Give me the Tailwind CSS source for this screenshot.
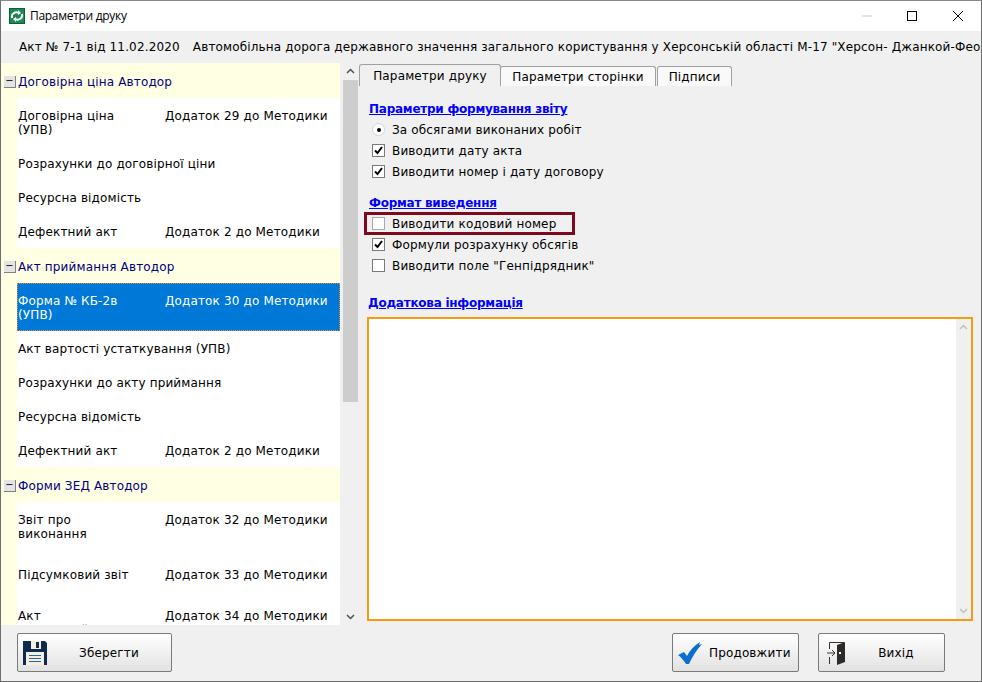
<!DOCTYPE html>
<html lang="uk">
  <head>
    <meta charset="UTF-8" />
    <title>Параметри друку</title>
    <script src="https://cdn.jsdelivr.net/npm/@tailwindcss/browser@4"></script>
  </head>
  <body class="w-[982px] h-[682px] overflow-hidden bg-[#f0f0f0] font-['DejaVu_Sans',sans-serif] text-[12px] tracking-[0.15px] text-black">
    <div class="flex flex-col h-[682px] border border-[#6e6e6e] border-t-[#8a8a8a]">
      <!-- title bar -->
      <div class="flex items-center h-[30px] bg-white shrink-0">
        <svg class="ml-[8px] w-[16px] h-[16px]" viewBox="0 0 16 16">
          <rect width="16" height="16" fill="#0c5f36" />
          <rect x="1" y="1" width="14" height="14" fill="#1c8a50" />
          <path d="M3 10c-1-4 3-7 7-5M13 6c1 4-3 7-7 5" fill="none" stroke="#fff" stroke-width="2" />
          <path d="M9 2l3 3-3 2zM7 14l-3-3 3-2z" fill="#fff" />
        </svg>
        <span class="ml-[5px] font-['Open_Sans',sans-serif] text-[12px] tracking-[-0.3px]">Параметри друку</span>
        <div class="ml-auto flex items-center h-full text-black">
          <svg class="w-[46px] h-[30px]" viewBox="0 0 46 30"><path d="M19 15h10" stroke="#c8c8c8" /></svg>
          <svg class="w-[46px] h-[30px]" viewBox="0 0 46 30"><rect x="18.500" y="10.500" width="9" height="9" fill="none" stroke="#000" /></svg>
          <svg class="w-[46px] h-[30px]" viewBox="0 0 46 30"><path d="M18 10l10 10M28 10l-10 10" stroke="#000" /></svg>
        </div>
      </div>
      <!-- document line -->
      <div class="flex items-center h-[32px] pl-[18px] shrink-0 whitespace-nowrap overflow-hidden">
        <span>Акт № 7-1 від 11.02.2020</span>
        <span class="ml-[13px]">Автомобільна дорога державного значення загального користування у Херсонській області М-17 "Херсон- Джанкой-Феодосія-Керч"</span>
      </div>
      <!-- middle -->
      <div class="flex h-[562px] shrink-0">
        <div class="w-[339px] h-full overflow-hidden bg-[#ffffe3] shrink-0">
          <div class="flex items-center h-[35px] pt-[2px] text-[#000080]">
            <span class="flex items-center justify-center ml-[3px] mr-[2px] w-[12px] h-[12px] bg-[#e4e4e4] border-r border-b border-[#808080] text-[#000] leading-none text-[10px]">−</span>
            Договірна ціна Автодор
          </div>
          <div class="ml-[16px] bg-white">
            <div class="flex items-start h-[48px] pl-px pt-[11px]"><span class="w-[147px] leading-[14px]">Договірна ціна<br />(УПВ)</span><span class="leading-[14px]">Додаток 29 до Методики</span></div>
            <div class="flex items-center h-[34px] pl-px pt-[2px]"><span>Розрахунки до договірної ціни</span></div>
            <div class="flex items-center h-[34px] pl-px pt-[2px]"><span>Ресурсна відомість</span></div>
            <div class="flex items-center h-[34px] pl-px pt-[2px]"><span class="w-[147px]">Дефектний акт</span><span>Додаток 2 до Методики</span></div>
          </div>
          <div class="flex items-center h-[35px] pt-[2px] text-[#000080]">
            <span class="flex items-center justify-center ml-[3px] mr-[2px] w-[12px] h-[12px] bg-[#e4e4e4] border-r border-b border-[#808080] text-[#000] leading-none text-[10px]">−</span>
            Акт приймання Автодор
          </div>
          <div class="ml-[16px] bg-white">
            <div class="flex items-start h-[48px] pt-[10px] bg-[#0078d7] text-white border border-dotted border-[#e08a3c]"><span class="w-[147px] leading-[14px]">Форма № КБ-2в<br />(УПВ)</span><span class="leading-[14px]">Додаток 30 до Методики</span></div>
            <div class="flex items-center h-[34px] pl-px pt-[2px]"><span>Акт вартості устаткування (УПВ)</span></div>
            <div class="flex items-center h-[34px] pl-px pt-[2px]"><span>Розрахунки до акту приймання</span></div>
            <div class="flex items-center h-[34px] pl-px pt-[2px]"><span>Ресурсна відомість</span></div>
            <div class="flex items-center h-[34px] pl-px pt-[2px]"><span class="w-[147px]">Дефектний акт</span><span>Додаток 2 до Методики</span></div>
          </div>
          <div class="flex items-center h-[35px] pt-[2px] text-[#000080]">
            <span class="flex items-center justify-center ml-[3px] mr-[2px] w-[12px] h-[12px] bg-[#e4e4e4] border-r border-b border-[#808080] text-[#000] leading-none text-[10px]">−</span>
            Форми ЗЕД Автодор
          </div>
          <div class="ml-[16px] bg-white">
            <div class="flex items-start h-[48px] pl-px pt-[11px]"><span class="w-[147px] leading-[14px]">Звіт про<br />виконання</span><span class="leading-[14px]">Додаток 32 до Методики</span></div>
            <div class="flex items-center h-[48px] pl-px pt-[2px]"><span class="w-[147px]">Підсумковий звіт</span><span>Додаток 33 до Методики</span></div>
            <div class="flex items-start h-[48px] pl-px pt-[11px]"><span class="w-[147px] leading-[14px]">Акт<br />проміжний</span><span class="leading-[14px]">Додаток 34 до Методики</span></div>
          </div>
        </div>
        <!-- list scrollbar -->
        <div class="flex flex-col w-[15px] ml-[3px] shrink-0 bg-[#f0f0f0]">
          <svg class="w-[15px] h-[17px] shrink-0" viewBox="0 0 15 17"><path d="M4 10l3.500-3.500L11 10" fill="none" stroke="#505050" stroke-width="1.500" /></svg>
          <div class="h-[322px] bg-[#cdcdcd]"></div>
          <svg class="w-[15px] h-[17px] mt-auto shrink-0" viewBox="0 0 15 17"><path d="M4 7l3.500 3.500L11 7" fill="none" stroke="#505050" stroke-width="1.500" /></svg>
        </div>
        <!-- right panel -->
        <div class="flex-1 flex flex-col min-w-0">
          <div class="flex items-end h-[23px] pl-[1px] shrink-0">
            <div class="flex items-center justify-center w-[142px] h-[22px] bg-[#f0f0f0] border border-b-0 border-[#a0a0a0] rounded-t-[3px]">Параметри друку</div>
            <div class="flex items-center justify-center w-[156px] h-[20px] bg-[#f9f9f9] border border-b-0 border-[#a0a0a0] rounded-t-[3px] -ml-px">Параметри сторінки</div>
            <div class="flex items-center justify-center w-[75px] h-[20px] bg-[#f9f9f9] border border-b-0 border-[#a0a0a0] rounded-t-[3px] ml-[1px]">Підписи</div>
          </div>
          <div class="pl-[11px] pt-[15px] flex flex-col">
            <a class="h-[16px] leading-[16px] font-bold tracking-[-0.25px] text-[#0000ff] underline">Параметри формування звіту</a>
            <div class="flex items-center h-[21px] mt-[2px]">
              <span class="flex items-center justify-center ml-[3px] w-[13px] h-[13px] rounded-full bg-white border border-[#d4d4d4]"><span class="w-[4px] h-[4px] rounded-full bg-black"></span></span>
              <span class="ml-[7px]">За обсягами виконаних робіт</span>
            </div>
            <div class="flex items-center h-[21px]">
              <span class="flex items-center justify-center ml-[3px] w-[13px] h-[13px] bg-white border border-[#7a7a7a]"><svg class="w-[11px] h-[11px]" viewBox="0 0 11 11"><path d="M2 5.500l2.500 2.500 4.500-6" fill="none" stroke="#000" stroke-width="2" /></svg></span>
              <span class="ml-[7px]">Виводити дату акта</span>
            </div>
            <div class="flex items-center h-[21px]">
              <span class="flex items-center justify-center ml-[3px] w-[13px] h-[13px] bg-white border border-[#7a7a7a]"><svg class="w-[11px] h-[11px]" viewBox="0 0 11 11"><path d="M2 5.500l2.500 2.500 4.500-6" fill="none" stroke="#000" stroke-width="2" /></svg></span>
              <span class="ml-[7px]">Виводити номер і дату договору</span>
            </div>
            <a class="h-[16px] leading-[16px] mt-[13px] font-bold tracking-[-0.25px] text-[#0000ff] underline">Формат виведення</a>
            <div class="flex items-center w-[211px] h-[23px] -ml-[5px] mt-[1px] border-[3px] border-[#7b0a1e]">
              <span class="ml-[5px] w-[13px] h-[13px] bg-white border border-[#a8a8a8] shrink-0"></span>
              <span class="ml-[7px]">Виводити кодовий номер</span>
            </div>
            <div class="flex items-center h-[21px] -mt-px">
              <span class="flex items-center justify-center ml-[3px] w-[13px] h-[13px] bg-white border border-[#7a7a7a]"><svg class="w-[11px] h-[11px]" viewBox="0 0 11 11"><path d="M2 5.500l2.500 2.500 4.500-6" fill="none" stroke="#000" stroke-width="2" /></svg></span>
              <span class="ml-[7px]">Формули розрахунку обсягів</span>
            </div>
            <div class="flex items-center h-[21px]">
              <span class="ml-[3px] w-[13px] h-[13px] bg-white border border-[#7a7a7a]"></span>
              <span class="ml-[7px]">Виводити поле "Генпідрядник"</span>
            </div>
            <a class="h-[16px] leading-[16px] mt-[19px] -ml-px font-bold tracking-[-0.25px] text-[#0000ff] underline">Додаткова інформація</a>
          </div>
          <div class="flex justify-end w-[606px] h-[304px] ml-[9px] mt-[6px] bg-white border-[2px] border-[#f39c12]">
            <div class="flex flex-col justify-between w-[15px] bg-[#f0f0f0]">
              <svg class="w-[15px] h-[17px]" viewBox="0 0 15 17"><path d="M4 10l3.500-3.500L11 10" fill="none" stroke="#c0c0c0" stroke-width="1.500" /></svg>
              <svg class="w-[15px] h-[17px]" viewBox="0 0 15 17"><path d="M4 7l3.500 3.500L11 7" fill="none" stroke="#c0c0c0" stroke-width="1.500" /></svg>
            </div>
          </div>
        </div>
      </div>
      <!-- bottom buttons -->
      <div class="flex items-start flex-1 pt-[8px] pl-[16px] bg-[#f0f0f0]">
        <button class="flex items-center w-[155px] h-[39px] border border-[#7a7a7a] rounded-[2px] bg-gradient-to-b from-white to-[#e2e2e2]">
          <svg class="ml-[5px] w-[24px] h-[24px] shrink-0" viewBox="0 0 24 24">
            <path d="M0 0h22l2 2v22H0z" fill="#0e2a4e" />
            <rect x="8" y="0" width="10" height="8" fill="#f6efe0" />
            <rect x="13" y="1" width="3" height="6" fill="#0e2a4e" />
            <rect x="3" y="11" width="18" height="13" fill="#f6efe0" />
            <path d="M6 14.500h12M6 17.500h12M6 20.500h12" stroke="#1f66b0" />
          </svg>
          <span class="flex-1 text-center">Зберегти</span>
        </button>
        <button class="flex items-center w-[127px] h-[39px] ml-[500px] border border-[#7a7a7a] rounded-[2px] bg-gradient-to-b from-white to-[#e2e2e2]">
          <svg class="ml-[5px] w-[24px] h-[22px] shrink-0" viewBox="0 0 24 22"><path d="M0 13L6 10L9 14C12 8 16 4 22 0L21 3L24 2C18 9 14 15 11 22H8C6 19 3 15 0 13Z" fill="#0b6fd0" /></svg>
          <span class="ml-[7px]">Продовжити</span>
        </button>
        <button class="flex items-center w-[127px] h-[39px] ml-[19px] border border-[#7a7a7a] rounded-[2px] bg-gradient-to-b from-white to-[#e2e2e2]">
          <svg class="ml-[8px] w-[18px] h-[24px] shrink-0" viewBox="0 0 18 24">
            <path d="M2.500 8V1.500H17M2.500 16v7" fill="none" stroke="#333" />
            <path d="M10 4l8-3v20l-8 3z" fill="#2d2a28" />
            <rect x="12" y="11" width="2" height="2" fill="#fff" />
            <path d="M0 12h8M5 9l3 3-3 3" fill="none" stroke="#333" />
          </svg>
          <span class="flex-1 pl-[3px] text-center">Вихід</span>
        </button>
      </div>
    </div>
  </body>
</html>
